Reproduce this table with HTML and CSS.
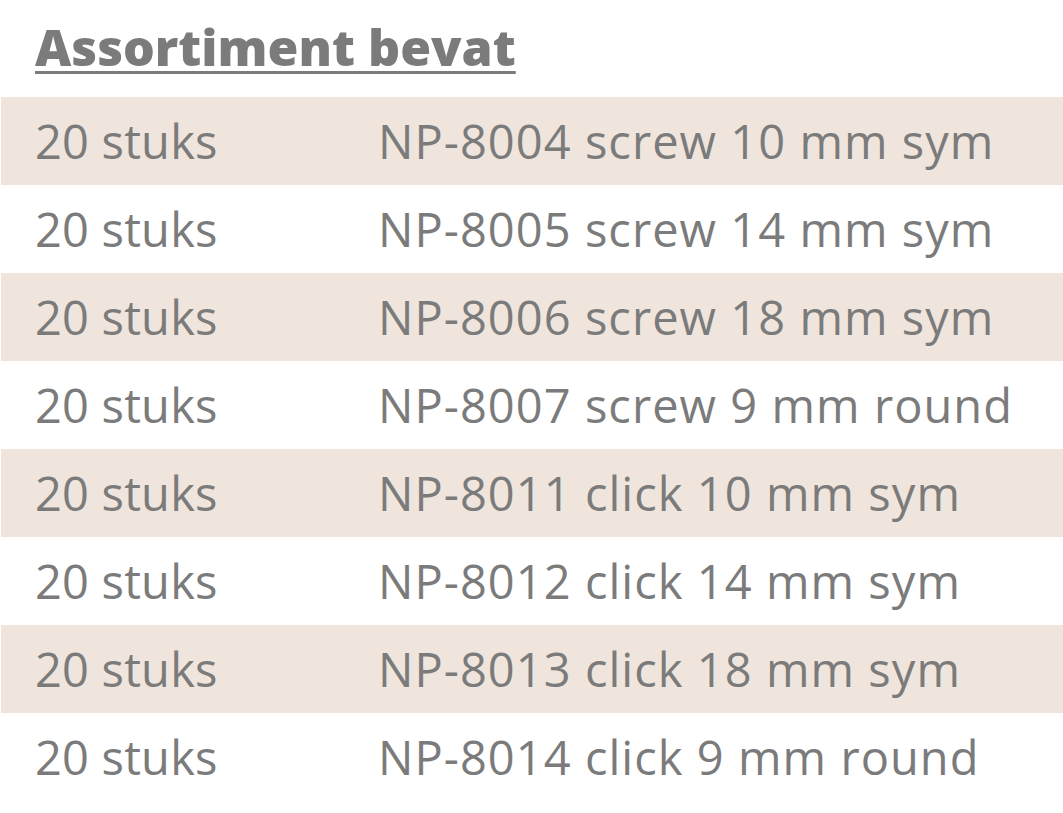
FILE: index.html
```html
<!DOCTYPE html>
<html lang="nl">
<head>
<meta charset="utf-8">
<title>Assortiment bevat</title>
<link rel="stylesheet" href="styles.css">
</head>
<body>
<div class="page">
  <h2 class="title">Assortiment bevat</h2>
  <div class="list">
    <div class="row shade"><span class="qty">20 stuks</span><span class="item">NP-8004 screw 10 mm sym</span></div>
    <div class="row"><span class="qty">20 stuks</span><span class="item">NP-8005 screw 14 mm sym</span></div>
    <div class="row shade"><span class="qty">20 stuks</span><span class="item">NP-8006 screw 18 mm sym</span></div>
    <div class="row"><span class="qty">20 stuks</span><span class="item">NP-8007 screw 9 mm round</span></div>
    <div class="row shade"><span class="qty">20 stuks</span><span class="item">NP-8011 click 10 mm sym</span></div>
    <div class="row"><span class="qty">20 stuks</span><span class="item">NP-8012 click 14 mm sym</span></div>
    <div class="row shade"><span class="qty">20 stuks</span><span class="item">NP-8013 click 18 mm sym</span></div>
    <div class="row"><span class="qty">20 stuks</span><span class="item">NP-8014 click 9 mm round</span></div>
  </div>
</div>
</body>
</html>
```
FILE: styles.css
```css
html, body {
  margin: 0;
  padding: 0;
  background: #ffffff;
}
.page {
  font-family: "Open Sans", "Noto Sans", sans-serif;
  color: #7b7b7b;
  width: 1063px;
}
.title {
  margin: 0;
  height: 97px;
  box-sizing: border-box;
  padding: 14px 0 0 35px;
  font-size: 50px;
  font-weight: 800;
  letter-spacing: 0;
  line-height: 66px;
  text-decoration: underline;
  text-decoration-thickness: 3px;
  text-underline-offset: 5px;
}
.list {
  display: flex;
  flex-direction: column;
  padding-left: 1px;
}
.row {
  display: flex;
  align-items: center;
  height: 88px;
  font-size: 47px;
  line-height: 1;
}
.row.shade {
  background: #efe5dc;
}
.qty {
  width: 343px;
  padding-left: 34px;
  flex: none;
  letter-spacing: 0.2px;
}
.item {
  flex: 1;
  letter-spacing: 1.05px;
}
```
